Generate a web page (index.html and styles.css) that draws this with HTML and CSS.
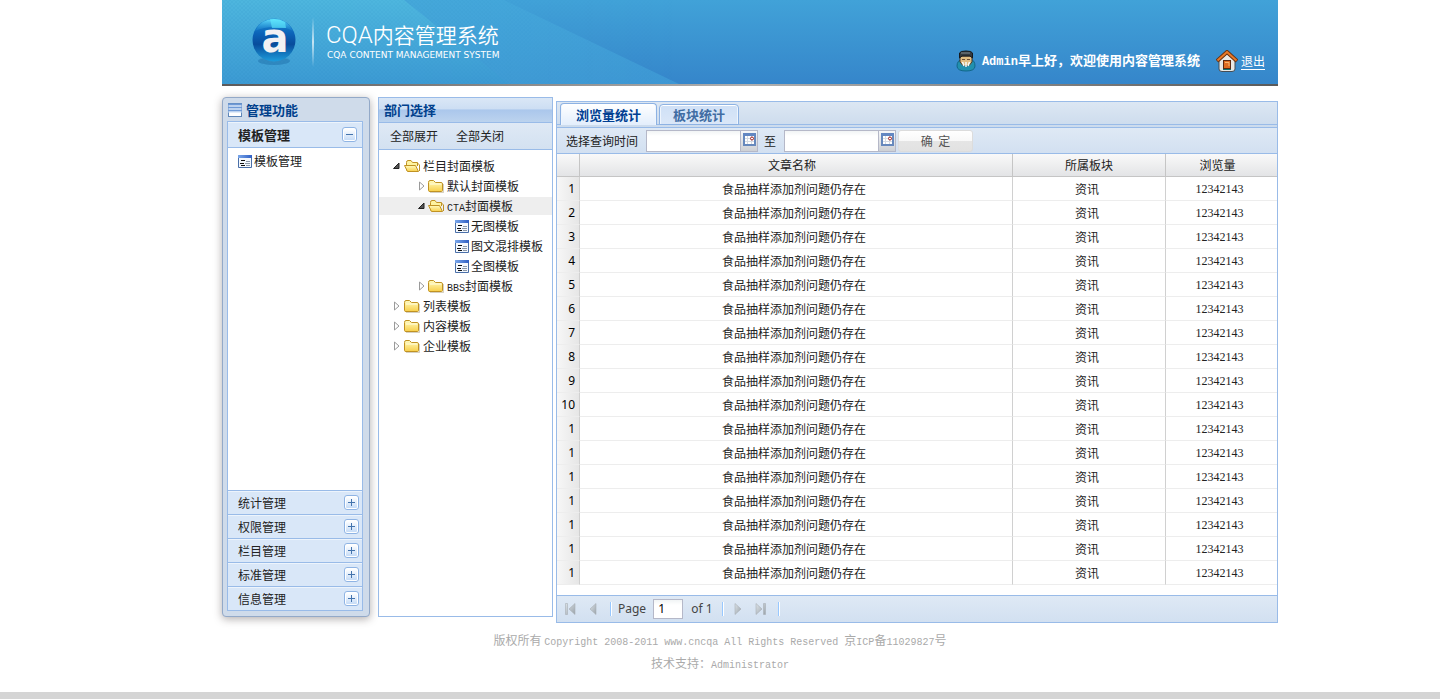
FILE: index.html
```html
<!DOCTYPE html>
<html lang="zh-CN">
<head>
<meta charset="utf-8">
<title>CQA内容管理系统</title>
<link rel="stylesheet" href="styles.css">
</head>
<body>
<svg class="defs" width="0" height="0" aria-hidden="true">
  <defs>
    <linearGradient id="gold" x1="0" y1="0" x2="0" y2="1"><stop offset="0" stop-color="#fffcc0"/><stop offset="1" stop-color="#f8cf4a"/></linearGradient>
    <linearGradient id="bluebar" x1="0" y1="0" x2="1" y2="0"><stop offset="0" stop-color="#7ba7ea"/><stop offset="1" stop-color="#2f5fc4"/></linearGradient>
    <linearGradient id="grey" x1="0" y1="0" x2="1" y2="1"><stop offset="0" stop-color="#dde3e8"/><stop offset="1" stop-color="#9aa3aa"/></linearGradient>
    <linearGradient id="btnface" x1="0" y1="0" x2="0" y2="1"><stop offset="0" stop-color="#fff"/><stop offset="1" stop-color="#c6dcf7"/></linearGradient>
    <symbol id="folder" viewBox="0 0 16 16">
      <path d="M.5 4.500 Q.5 2.500 2 2.500 H5.500 L7.500 4.500 H13 Q14.500 4.500 14.500 6 V12.500 Q14.500 13.500 13.500 13.500 H2 Q.5 13.500 .5 12.500 Z" fill="url(#gold)" stroke="#c09223"/>
      <path d="M2 6 H13.500" stroke="#fffde0"/>
      <path d="M2 14.500 H15.500 V6" fill="none" stroke="#8a7a50" opacity=".35"/>
    </symbol>
    <symbol id="folder-open" viewBox="0 0 16 16">
      <path d="M2.500 12.500 V4.500 Q2.500 2.500 4 2.500 H7 L8.500 4.500 H13.500 V8" fill="#fdf3a0" stroke="#c09223"/>
      <path d="M.5 7.500 H11.500 L14.500 13.500 H3.500 Z" fill="url(#gold)" stroke="#c09223"/>
      <path d="M13.500 5 L15.500 7 V13" fill="none" stroke="#c09223"/>
    </symbol>
    <symbol id="page" viewBox="0 0 14 13">
      <path d="M.5 .5 H13.500 V12.500 H.5 Z" fill="#f4f8fd" stroke="#4a6fa8"/>
      <path d="M0 0 H14 V3 H0 Z" fill="url(#bluebar)"/>
      <path d="M3 5.500 H7 M2 8.500 H6 M3 10.500 H7" stroke="#111"/>
      <path d="M8 6.500 H12 M7 8.500 H12 M8 10.500 H12" stroke="#8b98a8"/>
    </symbol>
    <symbol id="closed" viewBox="0 0 8 10"><path d="M2.500 1 V9 L7 5 Z" fill="#fff" stroke="#9a9a9a"/></symbol>
    <symbol id="opened" viewBox="0 0 8 10"><path d="M7 2 V7.500 H1.500 Z" fill="#555" stroke="#222"/></symbol>
    <symbol id="plus" viewBox="0 0 15 15">
      <rect x=".5" y=".5" width="14" height="14" rx="2.500" fill="#fff" stroke="#8fb4e4"/>
      <rect x="2" y="2" width="11" height="11" rx="1" fill="url(#btnface)"/>
      <path d="M4 7.500 H11 M7.500 4 V11" stroke="#4474ad"/>
    </symbol>
    <symbol id="minus" viewBox="0 0 15 15">
      <rect x=".5" y=".5" width="14" height="14" rx="2.500" fill="#fff" stroke="#8fb4e4"/>
      <rect x="2" y="2" width="11" height="11" rx="1" fill="url(#btnface)"/>
      <path d="M4 7.500 H11" stroke="#4474ad"/>
    </symbol>
    <symbol id="calendar" viewBox="0 0 13 13">
      <rect x="1" y="1" width="11" height="11" fill="#fff" stroke="#6789bd" stroke-width="2"/>
      <path d="M0 0 H13 V3 H0 Z" fill="#6387c2"/>
      <path d="M2 5.500 H11 M2 8.500 H11 M4.500 3 V11 M8.500 3 V11" stroke="#d5dbe3"/>
      <circle cx="9" cy="5.500" r="1.500" fill="#fff" stroke="#9c1c1c"/>
    </symbol>
    <symbol id="prev" viewBox="0 0 12 12"><path d="M9 .5 V11.500 L3 6 Z" fill="url(#grey)" stroke="#a7afb6" stroke-width=".6"/></symbol>
    <symbol id="next" viewBox="0 0 12 12"><path d="M3 .5 V11.500 L9 6 Z" fill="url(#grey)" stroke="#a7afb6" stroke-width=".6"/></symbol>
    <symbol id="first" viewBox="0 0 12 12"><path d="M1.500 .5 H3.500 V11.500 H1.500 Z M11 .5 V11.500 L5 6 Z" fill="url(#grey)" stroke="#a7afb6" stroke-width=".6"/></symbol>
    <symbol id="last" viewBox="0 0 12 12"><path d="M8.500 .5 H10.500 V11.500 H8.500 Z M1 .5 V11.500 L7 6 Z" fill="url(#grey)" stroke="#a7afb6" stroke-width=".6"/></symbol>
  </defs>
</svg>
<div class="wrap">
  <header class="banner">
    <svg class="rays" viewBox="0 0 1056 84" preserveAspectRatio="none" aria-hidden="true">
      <defs>
        <linearGradient id="ray1" x1="0" y1="0" x2="0" y2="1"><stop offset="0" stop-color="#4eb6de"/><stop offset="1" stop-color="#3c9ad3"/></linearGradient>
        <linearGradient id="ray2" x1="0" y1="0" x2="1" y2="0"><stop offset="0" stop-color="#48aedb" stop-opacity=".7"/><stop offset="1" stop-color="#45a7dc" stop-opacity=".5"/></linearGradient>
        <linearGradient id="fade" x1="0" y1="0" x2="1" y2="0"><stop offset="0" stop-color="#fff"/><stop offset="1" stop-color="#000"/></linearGradient>
        <pattern id="mesh" width="4" height="4" patternUnits="userSpaceOnUse"><path d="M0 0 L4 4 M4 0 L0 4" stroke="#1c7fbd" stroke-width=".5" opacity=".18"/></pattern>
        <mask id="meshmask"><rect width="460" height="84" fill="url(#fade)"/></mask>
      </defs>
      <path d="M0 0 H282 L457 84 H0 Z" fill="url(#ray2)"/>
      <path d="M0 0 H182 L287 84 H0 Z" fill="url(#ray1)"/>
      <rect width="460" height="84" fill="url(#mesh)" mask="url(#meshmask)"/>
    </svg>
    <svg class="logo" viewBox="0 0 48 52" role="img" aria-label="a">
      <defs>
        <linearGradient id="ball" x1="0" y1="0" x2="0" y2="1"><stop offset="0" stop-color="#1e8ed6"/><stop offset=".35" stop-color="#0b63b8"/><stop offset=".6" stop-color="#084c9c"/><stop offset="1" stop-color="#1d9cdb"/></linearGradient>
        <linearGradient id="gloss" x1="0" y1="0" x2="0" y2="1"><stop offset="0" stop-color="#62dcfa"/><stop offset="1" stop-color="#1a83cf" stop-opacity=".4"/></linearGradient>
      </defs>
      <ellipse cx="24" cy="45" rx="16" ry="4" fill="#17659f" opacity=".4"/>
      <circle cx="24" cy="24" r="21.500" fill="url(#ball)"/>
      <path d="M5 15 Q11 3 24 3 Q37 3 43 15 Q33 10 24 11 Q14 11 5 15 Z" fill="url(#gloss)"/>
      <path d="M20 3 Q28 2 35 6 L36 12 H22 Z" fill="#5fecff" opacity=".6"/>
      <text class="logo-letter" x="25" y="36" text-anchor="middle">a</text>
    </svg>
    <span class="rule"></span>
    <div class="brand">
      <h1><span class="brand-latin">CQA</span>内容管理系统</h1>
      <p>CQA CONTENT MANAGEMENT SYSTEM</p>
    </div>
    <div class="session">
      <svg class="avatar" viewBox="0 0 20 22" aria-hidden="true">
        <path d="M1 16 Q1 10 7 9 H14 Q19 10 19 16 Q19 21 10 21 Q1 21 1 16 Z" fill="#2191ae" stroke="#11678a"/>
        <path d="M4 6 H16 V12 Q14 16 10 16 Q6 16 4 12 Z" fill="#e0bd82" stroke="#46392c"/>
        <path d="M3.500 8 V3 Q4 1 10 1 Q16 1 16.500 3 V8 L14 6 H6 Z" fill="#333a40" stroke="#16191c"/>
        <path d="M5 3 H14" stroke="#818b91"/>
        <path d="M6 9.500 H9 M11 9.500 H14" stroke="#6b4d33"/>
        <path d="M6.500 12 L8 16 M10 12 V17 M13.500 12 L12 16" stroke="#f4fbfd" stroke-width="1.500"/>
      </svg>
      <strong><span class="lat-bold">Admin</span>早上好<span class="punct">，</span>欢迎使用内容管理系统</strong>
      <svg class="home" viewBox="0 0 22 23" aria-hidden="true">
        <path d="M3 10 L11 4 L19 10 V19 Q19 21.500 16 21.500 H6 Q3 21.500 3 19 Z" fill="#e9e9e6" stroke="#454d55"/>
        <path d="M1 11 L11 2 L21 11" fill="none" stroke="#6b3413" stroke-width="4"/>
        <path d="M1.500 10.500 L11 2 L20.500 10.500" fill="none" stroke="#ea7a28" stroke-width="2"/>
        <rect x="7.500" y="10.500" width="7" height="8" fill="#df6c22" stroke="#5b2a14"/>
        <path d="M9 12.500 H13 V16" fill="none" stroke="#f9b46e"/>
        <path d="M7 19.500 H15" stroke="#11746f"/>
      </svg>
      <a href="#logout">退出</a>
    </div>
  </header>

  <div class="columns">
    <nav class="sidebar" aria-label="管理功能">
      <h2 class="side-title">
        <svg width="14" height="14" viewBox="0 0 14 14" aria-hidden="true"><rect x=".5" y=".5" width="13" height="13" fill="#fff" stroke="#5f86b8"/><path d="M0 1.500 H14 M0 4.500 H14 M0 7.500 H14" stroke="#6f9ad6" stroke-width="2"/><path d="M0 3 H14 M0 6 H14 M0 9 H14" stroke="#c4d9f4"/></svg>
        管理功能
      </h2>
      <div class="accordion">
        <button class="fold active" type="button">模板管理<svg width="15" height="15" aria-hidden="true"><use href="#minus"/></svg></button>
        <div class="fold-body">
          <a href="#template"><svg width="14" height="13" aria-hidden="true"><use href="#page"/></svg>模板管理</a>
        </div>
        <button class="fold" type="button">统计管理<svg width="15" height="15" aria-hidden="true"><use href="#plus"/></svg></button>
        <button class="fold" type="button">权限管理<svg width="15" height="15" aria-hidden="true"><use href="#plus"/></svg></button>
        <button class="fold" type="button">栏目管理<svg width="15" height="15" aria-hidden="true"><use href="#plus"/></svg></button>
        <button class="fold" type="button">标准管理<svg width="15" height="15" aria-hidden="true"><use href="#plus"/></svg></button>
        <button class="fold" type="button">信息管理<svg width="15" height="15" aria-hidden="true"><use href="#plus"/></svg></button>
      </div>
    </nav>

    <section class="tree-panel">
      <h2 class="tree-title">部门选择</h2>
      <div class="tree-tools"><button type="button">全部展开</button><button type="button">全部关闭</button></div>
      <ul class="tree">
        <li><a class="node" href="#n1"><svg class="arrow"><use href="#opened"/></svg><svg class="ficon"><use href="#folder-open"/></svg>栏目封面模板</a>
          <ul>
            <li><a class="node level2" href="#n2"><svg class="arrow"><use href="#closed"/></svg><svg class="ficon"><use href="#folder"/></svg>默认封面模板</a></li>
            <li><a class="node level2 selected" href="#n3"><svg class="arrow"><use href="#opened"/></svg><svg class="ficon"><use href="#folder-open"/></svg><span><span class="lat">CTA</span>封面模板</span></a>
              <ul>
                <li><a class="node level3" href="#n4"><svg class="picon"><use href="#page"/></svg>无图模板</a></li>
                <li><a class="node level3" href="#n5"><svg class="picon"><use href="#page"/></svg>图文混排模板</a></li>
                <li><a class="node level3" href="#n6"><svg class="picon"><use href="#page"/></svg>全图模板</a></li>
              </ul>
            </li>
            <li><a class="node level2" href="#n7"><svg class="arrow"><use href="#closed"/></svg><svg class="ficon"><use href="#folder"/></svg><span><span class="lat">BBS</span>封面模板</span></a></li>
          </ul>
        </li>
        <li><a class="node" href="#n8"><svg class="arrow"><use href="#closed"/></svg><svg class="ficon"><use href="#folder"/></svg>列表模板</a></li>
        <li><a class="node" href="#n9"><svg class="arrow"><use href="#closed"/></svg><svg class="ficon"><use href="#folder"/></svg>内容模板</a></li>
        <li><a class="node" href="#n10"><svg class="arrow"><use href="#closed"/></svg><svg class="ficon"><use href="#folder"/></svg>企业模板</a></li>
      </ul>
    </section>

    <main class="stats">
      <div class="tabs" role="tablist">
        <button class="tab current" type="button" role="tab" aria-selected="true">浏览量统计</button>
        <button class="tab" type="button" role="tab" aria-selected="false">板块统计</button>
      </div>
      <form class="query">
        <label for="from">选择查询时间</label>
        <span class="date"><input id="from" type="text"><button type="button" aria-label="选择开始日期"><svg width="13" height="13"><use href="#calendar"/></svg></button></span>
        <label class="to" for="until">至</label>
        <span class="date"><input id="until" type="text"><button type="button" aria-label="选择结束日期"><svg width="13" height="13"><use href="#calendar"/></svg></button></span>
        <button class="submit" type="button">确&nbsp; 定</button>
      </form>
      <table class="grid">
        <colgroup><col class="c-num"><col><col class="c-board"><col class="c-views"></colgroup>
        <thead><tr><th></th><th>文章名称</th><th>所属板块</th><th>浏览量</th></tr></thead>
        <tbody>
          <tr><td>1</td><td>食品抽样添加剂问题仍存在</td><td>资讯</td><td>12342143</td></tr>
          <tr><td>2</td><td>食品抽样添加剂问题仍存在</td><td>资讯</td><td>12342143</td></tr>
          <tr><td>3</td><td>食品抽样添加剂问题仍存在</td><td>资讯</td><td>12342143</td></tr>
          <tr><td>4</td><td>食品抽样添加剂问题仍存在</td><td>资讯</td><td>12342143</td></tr>
          <tr><td>5</td><td>食品抽样添加剂问题仍存在</td><td>资讯</td><td>12342143</td></tr>
          <tr><td>6</td><td>食品抽样添加剂问题仍存在</td><td>资讯</td><td>12342143</td></tr>
          <tr><td>7</td><td>食品抽样添加剂问题仍存在</td><td>资讯</td><td>12342143</td></tr>
          <tr><td>8</td><td>食品抽样添加剂问题仍存在</td><td>资讯</td><td>12342143</td></tr>
          <tr><td>9</td><td>食品抽样添加剂问题仍存在</td><td>资讯</td><td>12342143</td></tr>
          <tr><td>10</td><td>食品抽样添加剂问题仍存在</td><td>资讯</td><td>12342143</td></tr>
          <tr><td>1</td><td>食品抽样添加剂问题仍存在</td><td>资讯</td><td>12342143</td></tr>
          <tr><td>1</td><td>食品抽样添加剂问题仍存在</td><td>资讯</td><td>12342143</td></tr>
          <tr><td>1</td><td>食品抽样添加剂问题仍存在</td><td>资讯</td><td>12342143</td></tr>
          <tr><td>1</td><td>食品抽样添加剂问题仍存在</td><td>资讯</td><td>12342143</td></tr>
          <tr><td>1</td><td>食品抽样添加剂问题仍存在</td><td>资讯</td><td>12342143</td></tr>
          <tr><td>1</td><td>食品抽样添加剂问题仍存在</td><td>资讯</td><td>12342143</td></tr>
          <tr><td>1</td><td>食品抽样添加剂问题仍存在</td><td>资讯</td><td>12342143</td></tr>
        </tbody>
      </table>
      <div class="pager">
        <button type="button" aria-label="第一页"><svg><use href="#first"/></svg></button>
        <button type="button" aria-label="上一页"><svg><use href="#prev"/></svg></button>
        <span class="sep"></span>
        <label for="pageno">Page</label>
        <input id="pageno" type="text" value="1">
        <span class="total">of 1</span>
        <span class="sep"></span>
        <button type="button" aria-label="下一页"><svg><use href="#next"/></svg></button>
        <button type="button" aria-label="最后一页"><svg><use href="#last"/></svg></button>
        <span class="sep"></span>
      </div>
    </main>
  </div>
</div>
<footer class="foot">
  <p>版权所有 <span class="lat">Copyright 2008-2011 www.cncqa All Rights Reserved </span>京<span class="lat">ICP</span>备<span class="lat">11029827</span>号</p>
  <p>技术支持<span class="punct">：</span><span class="lat">Administrator</span></p>
</footer>
</body>
</html>
```
FILE: styles.css
```css
* { box-sizing: border-box; }
body {
  margin: 0;
  min-height: 100vh;
  display: flex;
  flex-direction: column;
  background: #fff;
  color: #222;
  font: 12px/20px "Noto Sans CJK SC", sans-serif;
}
button, input { font: inherit; color: inherit; margin: 0; padding: 0; }
button { background: none; border: 0; cursor: pointer; }
h1, h2, p, ul { margin: 0; padding: 0; }
ul { list-style: none; }
a { color: inherit; text-decoration: none; }
svg { display: block; flex: none; }
.defs { position: absolute; }
.lat { font-family: "Liberation Mono", monospace; font-size: 10px; line-height: 1; }
.punct { font-family: "Noto Sans CJK TC", sans-serif; line-height: 1; }
.wrap { padding: 0 162px 0 222px; }

/* Banner */
.banner {
  position: relative;
  display: flex;
  height: 86px;
  padding-left: 28px;
  background: linear-gradient(#41a2d8, #3585ca);
}
.banner::after {
  content: "";
  position: absolute;
  inset: auto 0 0;
  height: 2px;
  background: linear-gradient(90deg, #5c5a5a, #b0b0b0 50%, #5a5a5a);
}
.rays { position: absolute; inset: 0 0 2px; width: 100%; height: 84px; }
.logo, .rule, .brand, .session { position: relative; }
.logo { width: 48px; height: 52px; margin-top: 16px; }
.logo-letter { font: bold 40px "DejaVu Sans", sans-serif; fill: #f2f1f3; }
.rule {
  width: 2px;
  height: 50px;
  margin: 17px 12px 0 14px;
  background: linear-gradient(rgba(255,255,255,0), rgba(255,255,255,.7) 50%, rgba(255,255,255,0));
}
.brand { color: #fff; margin-top: 20px; white-space: nowrap; }
.brand h1 { font-size: 21px; font-weight: 350; line-height: 29px; }
.brand-latin { font-family: Roboto, sans-serif; font-size: 24px; font-weight: 300; }
.brand p { padding-left: 1px; font: 9px/10px "DejaVu Sans", sans-serif; }
.session {
  display: flex;
  align-items: center;
  height: 24px;
  margin: 49px 13px 0 auto;
  color: #fff;
  white-space: nowrap;
}
.session strong { margin: 0 16px 0 6px; font-size: 13px; }
.lat-bold { font-family: "Liberation Mono", monospace; font-size: 12px; }
.avatar { width: 20px; height: 22px; }
.home { width: 22px; height: 23px; margin-right: 3px; }
.session a { text-decoration: underline; text-underline-offset: 3px; }

/* Columns */
.columns { display: flex; padding-top: 11px; }

.sidebar {
  display: flex;
  flex-direction: column;
  width: 148px;
  margin: 0 8px 6px 0;
  padding: 0 6px 5px 4px;
  border: 1px solid #93a9c8;
  border-radius: 4px;
  background: #cfdbea;
  box-shadow: 0 2px 8px rgba(60, 50, 50, .4);
}
.side-title {
  display: flex;
  align-items: center;
  gap: 4px;
  height: 23px;
  padding: 0 1px;
  color: #00408c;
  font-size: 13px;
}
.accordion {
  flex: 1;
  display: flex;
  flex-direction: column;
  border: 1px solid #99bbe8;
  background: #fff;
}
.fold {
  display: flex;
  align-items: center;
  justify-content: space-between;
  height: 24px;
  padding: 0 3px 0 10px;
  border-top: 1px solid #99bbe8;
  background: #d9e7f8;
  box-shadow: inset 0 1px #edf4fc;
  text-align: left;
}
.fold.active {
  height: 26px;
  padding-right: 5px;
  border-top: 0;
  border-bottom: 1px solid #99bbe8;
  font-size: 13px;
  font-weight: bold;
}
.fold-body { flex: 1; padding: 3px 0 0 10px; }
.fold-body a { display: flex; align-items: center; gap: 2px; }

.tree-panel {
  width: 175px;
  margin: 0 3px 6px 0;
  border: 1px solid #99bbe8;
}
.tree-title {
  height: 25px;
  padding-left: 5px;
  border-bottom: 1px solid #99bbe8;
  background: linear-gradient(#dae7f6, #cddef3 45%, #abc7ec 50%, #bcd3ee);
  color: #00408c;
  font-size: 13px;
  line-height: 24px;
}
.tree-tools {
  display: flex;
  gap: 18px;
  height: 27px;
  padding-left: 11px;
  border-bottom: 1px solid #99bbe8;
  background: linear-gradient(#dfe9f5, #d3e1f1);
}
.tree { padding-top: 6px; }
.node {
  display: flex;
  align-items: center;
  height: 20px;
  padding-left: 13px;
  line-height: 18px;
  white-space: nowrap;
}
.node.level2 { padding-left: 38px; }
.node.level3 { padding-left: 76px; }
.node.selected { height: 18px; margin: 1px 0; background: #eee; }
.arrow { width: 8px; height: 10px; margin-right: 4px; }
.ficon { width: 16px; height: 16px; margin-right: 3px; }
.level2 .arrow { margin-right: 3px; }
.picon { width: 14px; height: 13px; margin-right: 2px; }

/* Statistics panel */
.stats {
  flex: 1;
  min-width: 0;
  margin-top: 4px;
  border: 1px solid #99bbe8;
}
.tabs {
  display: flex;
  align-items: flex-end;
  gap: 2px;
  height: 26px;
  padding: 0 3px 2px;
  border-bottom: 1px solid #99bbe8;
  background: linear-gradient(#99bbe8, #99bbe8) 0 22px / 100% 1px no-repeat,
    linear-gradient(#dce7f3, #ccdbed);
}
.tab {
  height: 21px;
  padding: 0 13px;
  border: 1px solid #8db2e3;
  border-radius: 4px 4px 0 0;
  background: linear-gradient(#cfe0f6, #dae7f8);
  box-shadow: inset 0 1px #fff, inset 1px 0 #eef5fd, inset -1px 0 #eef5fd;
  color: #416da3;
  font-size: 13px;
  font-weight: bold;
  line-height: 18px;
}
.tab.current {
  height: 22px;
  padding: 0 15px;
  border-bottom: 0;
  background: linear-gradient(#fff, #e3eefc);
  color: #003f92;
}
.query {
  display: flex;
  align-items: center;
  height: 26px;
  padding-left: 9px;
  border-bottom: 1px solid #99bbe8;
  background: linear-gradient(#dfe9f5, #d2e0f1);
}
.query label { line-height: 18px; }
.date { display: flex; width: 112px; height: 22px; margin-left: 8px; border: 1px solid #b5b8c8; }
.date input {
  flex: 1;
  min-width: 0;
  padding: 0 3px;
  border: 0;
  background: linear-gradient(#f1f4f5, #fff 5px);
}
.date button {
  width: 17px;
  display: grid;
  place-items: center;
  padding-bottom: 2px;
  border-left: 1px solid #b5b8c8;
  background: linear-gradient(#f6f7f9, #cdd0d5);
}
.to { padding-left: 6px; }
.submit {
  width: 75px;
  height: 22px;
  margin-left: 2px;
  border: 1px solid #dcdcdc;
  border-radius: 3px;
  background: linear-gradient(#fff, #f8f8f8 50%, #e5e5e5 52%, #e2e2e2);
  color: #555;
}
.grid { width: 100%; table-layout: fixed; border-collapse: separate; border-spacing: 0; text-align: center; margin-bottom: 10px; }
.c-num { width: 23px; }
.c-board { width: 153px; }
.c-views { width: 111px; }
.grid th, .grid td { padding: 0; border-right: 1px solid #d0d0d0; border-bottom: 1px solid #ededed; }
.grid th {
  height: 23px;
  padding-right: 8px;
  border-color: #c5c5c5;
  background: linear-gradient(#f9f9f9, #e3e4e6);
  font-weight: normal;
}
.grid th:nth-child(3) { padding-right: 0; }
.grid td { height: 24px; padding-right: 4px; line-height: 22px; }
.grid tr > :last-child { border-right: 0; }
.grid td:last-child { font-family: "Liberation Serif", serif; }
.grid td:first-child {
  background: linear-gradient(90deg, #f7f7f7, #e6e6e6);
  color: #000;
  font-family: "Noto Sans", sans-serif;
  text-align: right;
}
.pager {
  display: flex;
  align-items: center;
  height: 27px;
  padding-left: 7px;
  border-top: 1px solid #99bbe8;
  background: linear-gradient(#dfe9f5, #d2e0f1);
  color: #444;
  font: 12px/20px "Noto Sans", sans-serif;
}
.pager button { margin-right: 11px; }
.pager svg { width: 12px; height: 12px; }
.sep { width: 2px; height: 14px; border-left: 1px solid #98c8ff; border-right: 1px solid #fff; }
.pager label { margin: 0 7px 0 6px; }
.pager input {
  width: 30px;
  height: 20px;
  padding-left: 4px;
  border: 1px solid #b5b8c8;
  background: linear-gradient(#f1f4f5, #fff 5px);
  color: #000;
}
.total { margin: 0 9px 0 8px; }
.total + .sep { margin-right: 8px; }

/* Footer */
.foot {
  flex: 1;
  padding-top: 5px;
  border-bottom: 7px solid #d5d5d5;
  color: #aaa;
  line-height: 23px;
  text-align: center;
}
```
